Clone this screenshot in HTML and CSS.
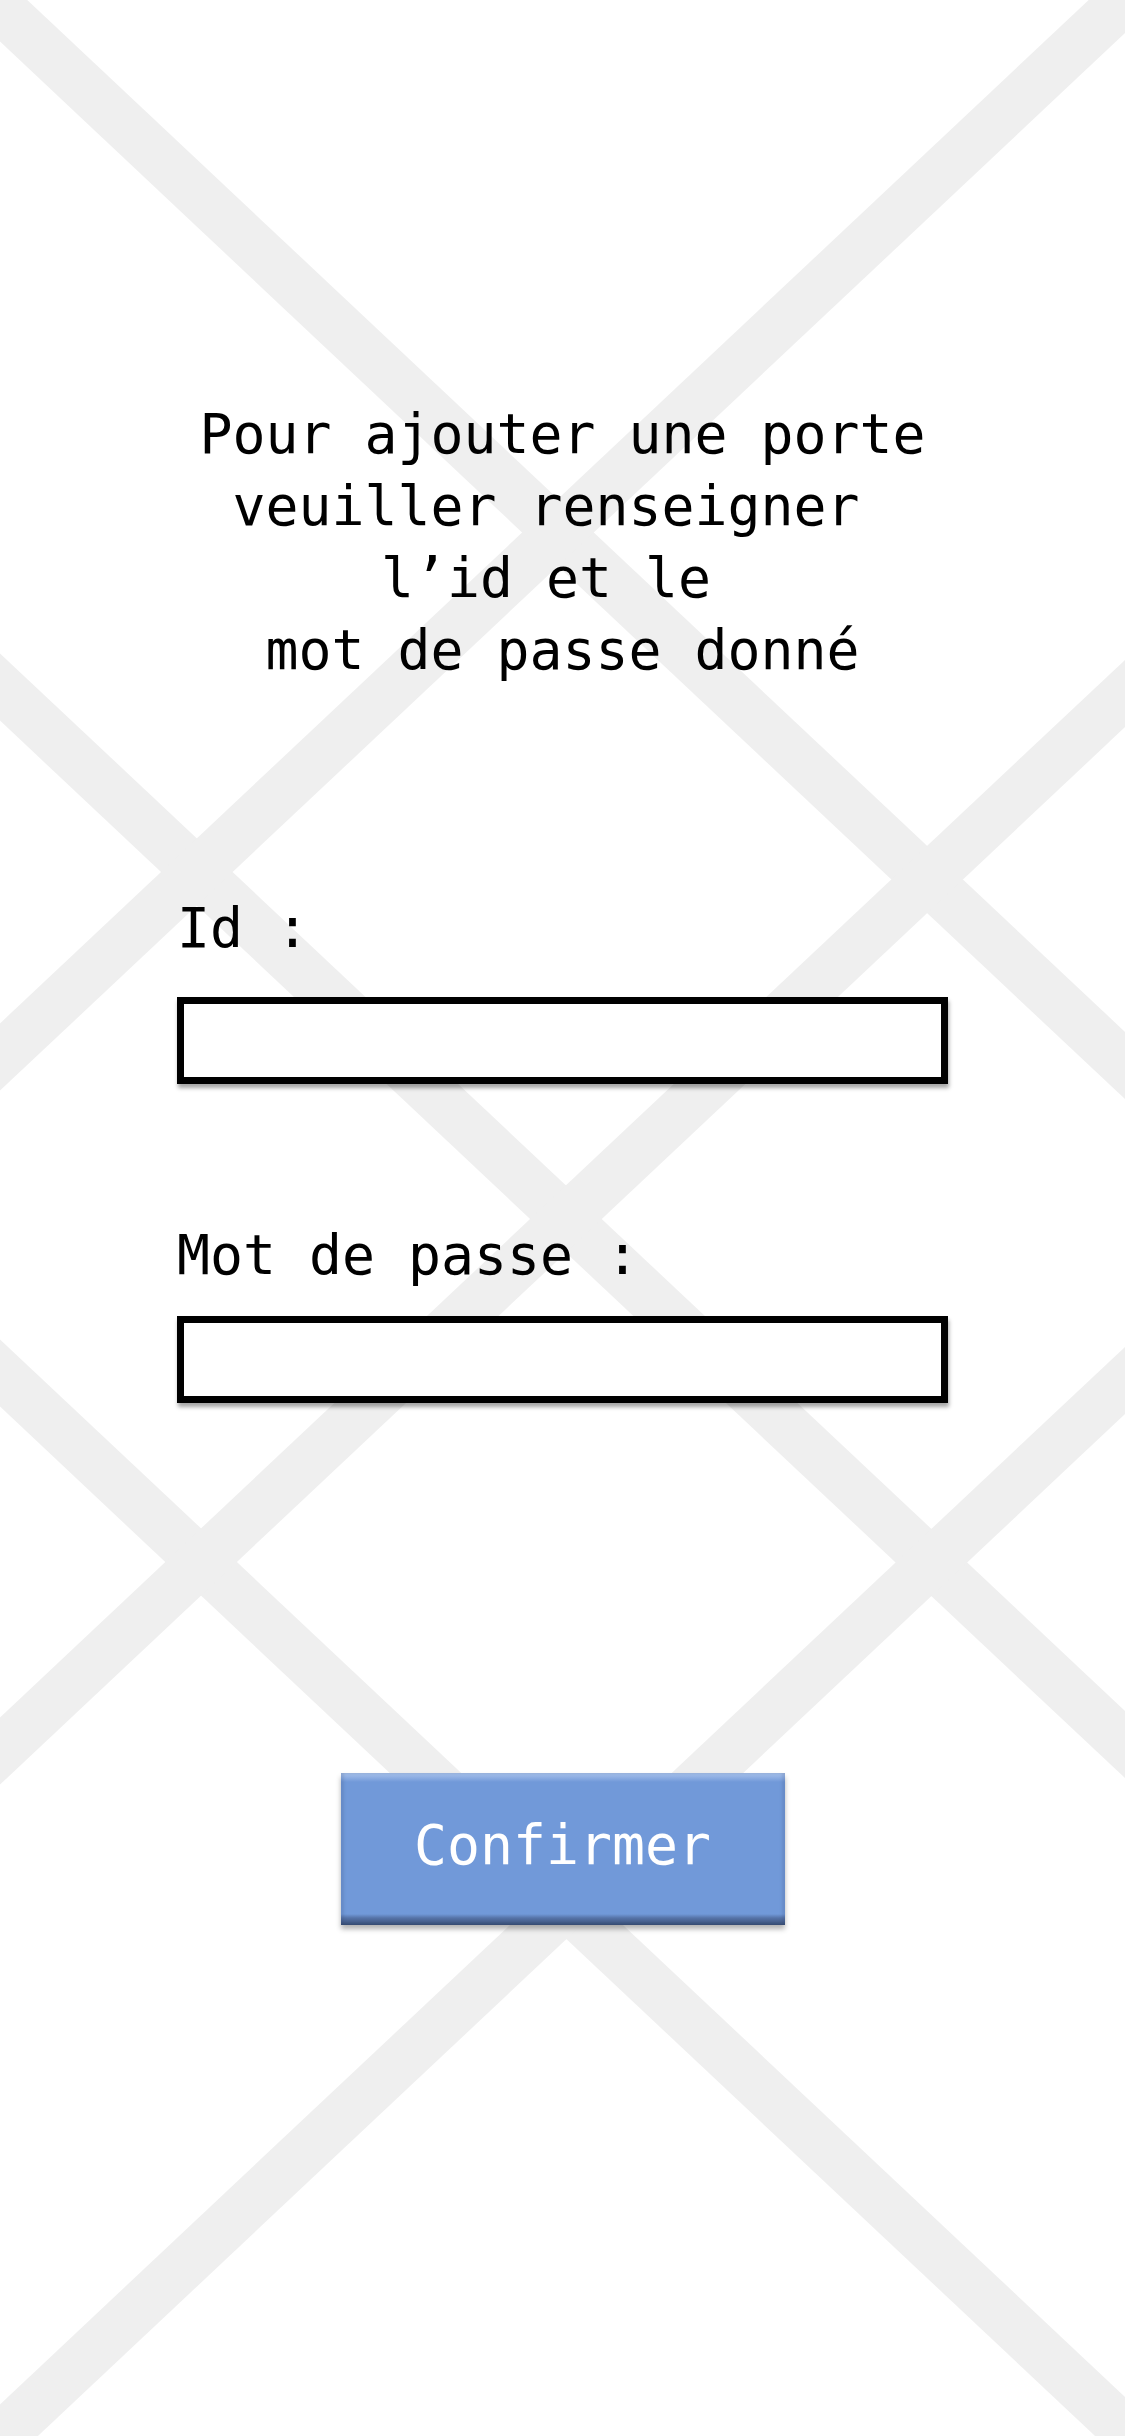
FILE: index.html
```html
<!DOCTYPE html>
<html lang="fr">
<head>
    <meta charset="UTF-8">
    <meta name="viewport" content="width=device-width, initial-scale=1.0">
    <title>Ajouter une porte</title>
    <link rel="stylesheet" href="styles.css">
</head>
<body>
    <!-- fond : croisillons gris -->
    <svg class="backdrop" viewBox="0 0 1125 2436" preserveAspectRatio="none" aria-hidden="true">
        <g stroke="#efefef" stroke-width="49">
            <line x1="-60" y1="-48.4" x2="1185" y2="1121.9" />
            <line x1="-60" y1="630.6" x2="1185" y2="1800.9" />
            <line x1="-60" y1="1316.6" x2="1185" y2="2486.9" />
            <line x1="-60" y1="1113.4" x2="1185" y2="-56.9" />
            <line x1="-60" y1="1807.4" x2="1185" y2="637.1" />
            <line x1="-60" y1="2494.4" x2="1185" y2="1324.1" />
        </g>
    </svg>

    <main class="page">
        <h1 class="intro">
            <span class="intro-line">Pour ajouter une porte</span>
            <span class="intro-line">veuiller renseigner </span>
            <span class="intro-line">l’id et le </span>
            <span class="intro-line">mot de passe donné</span>
        </h1>

        <form class="door-form">
            <label class="field-label" for="door-id">Id :</label>
            <input id="door-id" class="field-input" type="text">

            <label class="field-label label-pass" for="door-pass">Mot de passe :</label>
            <input id="door-pass" class="field-input input-pass" type="password">

            <button class="confirm-btn" type="button">Confirmer</button>
        </form>
    </main>
</body>
</html>
```

FILE: styles.css
```css
html, body {
    margin: 0;
    padding: 0;
}
body {
    position: relative;
    min-height: 2436px;
    overflow: hidden;
    background: #fff;
    font-family: "DejaVu Sans Mono", "Liberation Mono", monospace;
    color: #000;
}
.backdrop {
    position: absolute;
    top: 0;
    left: 0;
    width: 100%;
    height: 2436px;
    z-index: 0;
}
.page {
    position: relative;
    z-index: 1;
    padding-top: 398px;
}
.intro {
    margin: 0;
    font-size: 54.8px;
    font-weight: normal;
    line-height: 72px;
    text-align: center;
}
.intro-line {
    display: block;
    white-space: pre;
}
.door-form {
    display: flex;
    flex-direction: column;
    width: 771px;
    margin: 206px auto 0;
}
.field-label {
    font-size: 54.8px;
    line-height: 72px;
}
.label-pass {
    margin-top: 135px;
}
.field-input {
    box-sizing: border-box;
    width: 100%;
    height: 87px;
    margin-top: 33px;
    border: 7px solid #000;
    background: #fff;
    box-shadow: 1px 4px 4px rgba(0, 0, 0, 0.35);
    outline: none;
    font-family: inherit;
    font-size: 40px;
}
.input-pass {
    margin-top: 25px;
}
.confirm-btn {
    align-self: center;
    width: 444px;
    height: 152px;
    margin-top: 370px;
    padding: 0 0 8px;
    border: none;
    background: linear-gradient(to bottom,
        #aac3ec 0,
        #7199d9 9px,
        #7199d9 calc(100% - 11px),
        #5673a8 calc(100% - 7px),
        #3a4f75 100%);
    box-shadow: inset 3px 0 3px rgba(40, 60, 100, 0.15),
                inset -3px 0 3px rgba(40, 60, 100, 0.15),
                0 4px 5px rgba(0, 0, 0, 0.3);
    color: #fff;
    font-family: inherit;
    font-size: 54.8px;
    cursor: pointer;
}
```
